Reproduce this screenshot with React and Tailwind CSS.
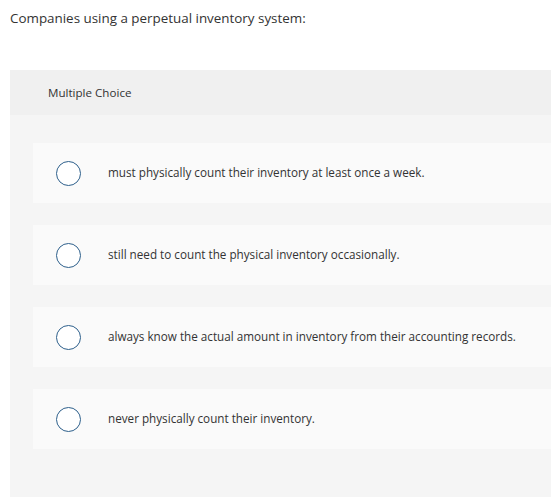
import React from 'react';

const options = [
  'must physically count their inventory at least once a week.',
  'still need to count the physical inventory occasionally.',
  'always know the actual amount in inventory from their accounting records.',
  'never physically count their inventory.',
];

const App = () => {
  return (
    <div className="w-[551px] h-[501px] bg-white overflow-hidden text-[#333] font-['Open_Sans',sans-serif]">
      <p className="pl-[10px] pt-[9px] text-[13.4px] leading-[18px]">Companies using a perpetual inventory system:</p>

      <div className="ml-[10px] mt-[43px]">
        <div className="h-[45px] bg-[#f0f0f0] pl-[38px] flex items-center text-[11.6px]">Multiple Choice</div>
        <div className="bg-[#f5f5f5] pl-[23px] pt-[28px] pb-[48px] flex flex-col gap-[22px]">
          {options.map(o => (
            <div key={o} className="h-[60px] bg-[#fafafa] flex items-center">
              <span className="ml-[23px] w-[25px] h-[25px] rounded-full border-[1.5px] border-[#2d5f8b] bg-white shrink-0" />
              <span className="ml-[27px] text-[11.7px]">{o}</span>
            </div>
          ))}
        </div>
      </div>
    </div>
  );
};

export default App;
